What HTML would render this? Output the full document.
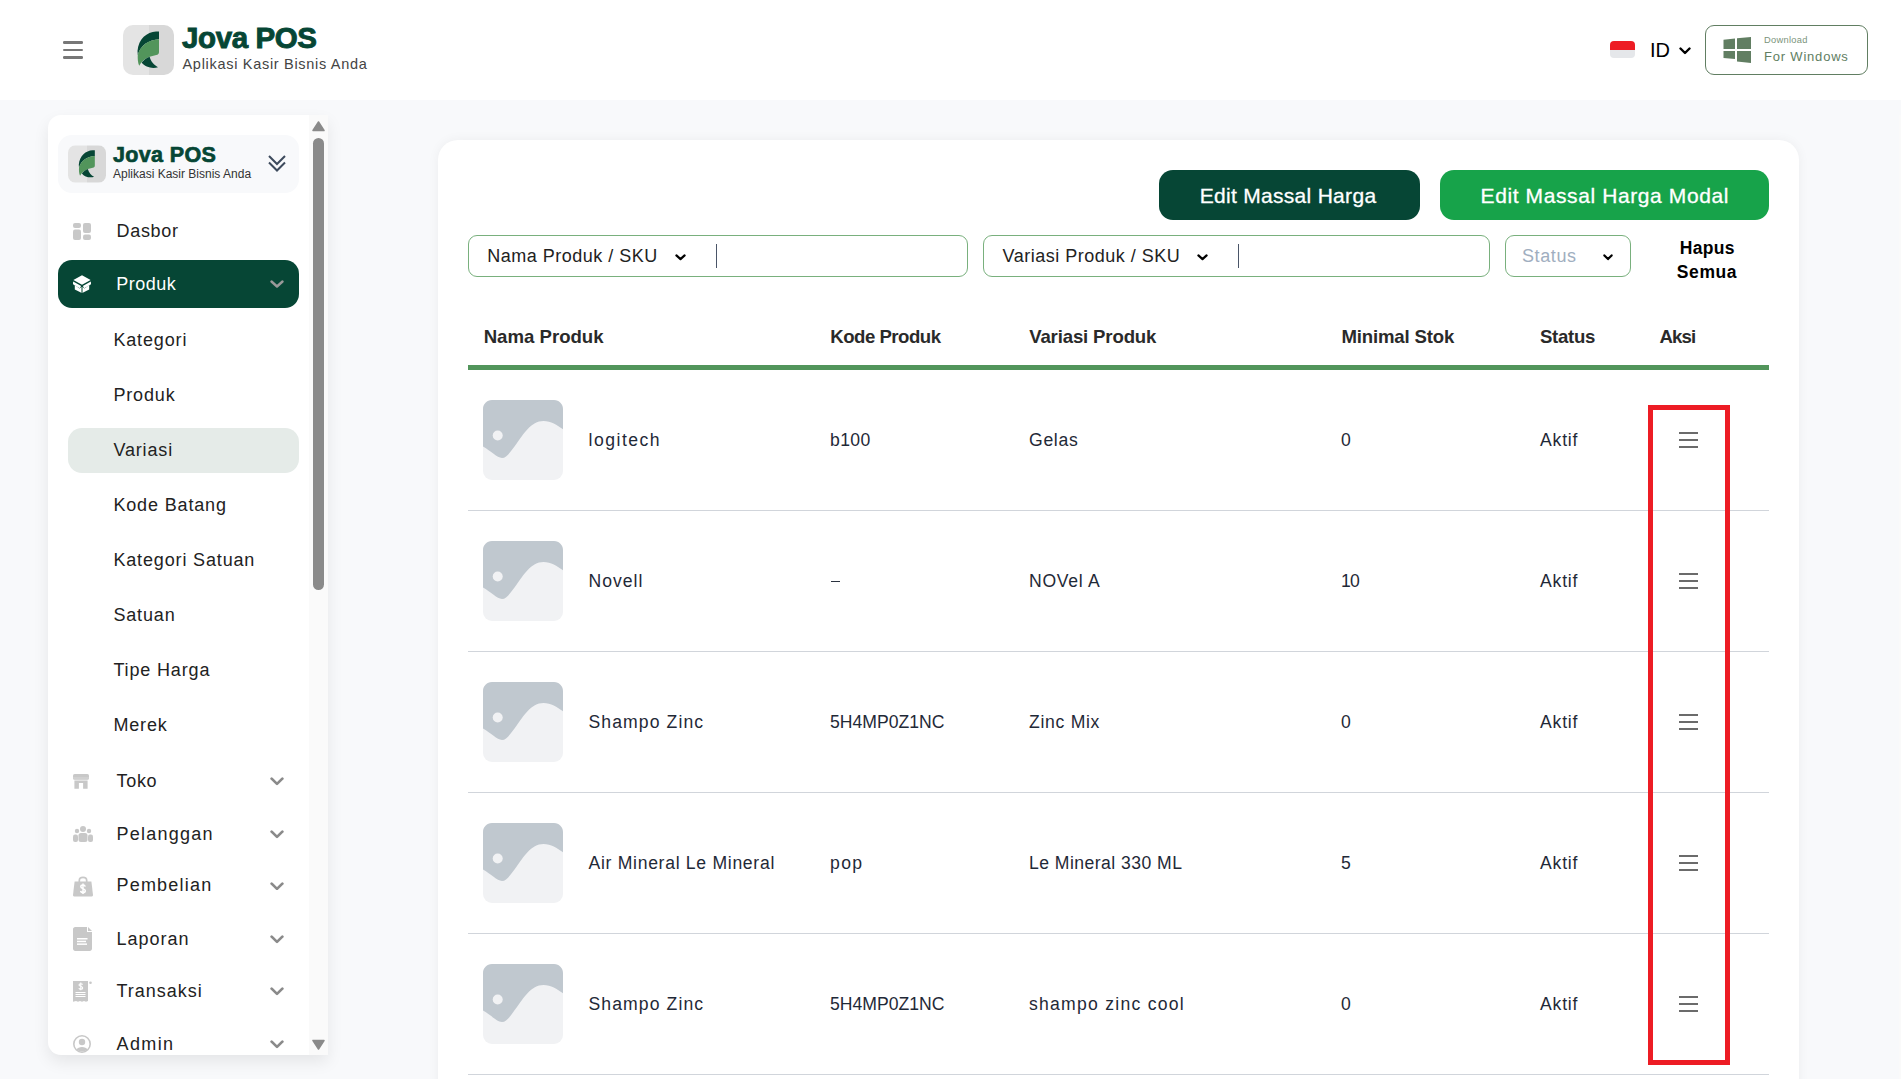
<!DOCTYPE html>
<html><head><meta charset="utf-8"><title>Jova POS - Variasi</title>
<style>
html,body{margin:0;padding:0}
body{width:1901px;height:1079px;overflow:hidden;position:relative;background:#f8f9fb;font-family:"Liberation Sans",sans-serif}
.t{position:absolute;line-height:1;white-space:nowrap}
</style></head><body>
<div style="position:absolute;left:0px;top:0px;width:1901px;height:100px;background:#fff"></div>
<div style="position:absolute;left:63px;top:41.4px;width:20px;height:2.2px;background:#777;border-radius:1.2px"></div>
<div style="position:absolute;left:63px;top:48.7px;width:20px;height:2.2px;background:#777;border-radius:1.2px"></div>
<div style="position:absolute;left:63px;top:56.4px;width:20px;height:2.2px;background:#777;border-radius:1.2px"></div>
<svg width="51" height="50" viewBox="0 0 51 50" style="position:absolute;left:123px;top:25px">
<defs><clipPath id="ch"><rect x="0" y="0" width="51" height="50" rx="10"/></clipPath></defs>
<g clip-path="url(#ch)"><rect x="0" y="0" width="25.5" height="50" fill="#e4e4e4"/><rect x="25.5" y="0" width="25.5" height="50" fill="#d8d8d8"/></g>
<path d="M36,6.6 L36,14.2 C26,14.8 17.5,20 14.8,30 L14.5,26 C15.5,14 24,7 33,6.6 Z" fill="#064635"/>
<path d="M36,14.2 L36,27 C36,29 35,29.6 33.3,30 L26.6,31.8 C22,33.5 18.5,36.5 16.2,40.8 C14.8,38 14.5,33 14.8,29.6 C17.5,20 26,14.8 36,14.2 Z" fill="#52955b"/>
<path d="M26.6,31.8 C28,37 31,40 35,42.2 C30,44 22,42.5 18.6,37.6 C21,34.8 23.5,33 26.6,31.8 Z" fill="#064635"/>
</svg>
<div class="t" style="left:182.0px;top:22.9px;font-size:29.5px;color:#064635;font-weight:800;letter-spacing:-0.4px;-webkit-text-stroke:0.9px #064635">Jova POS</div>
<div class="t" style="left:182.5px;top:56.7px;font-size:14.5px;color:#444;font-weight:400;letter-spacing:0.7px;">Aplikasi Kasir Bisnis Anda</div>
<div style="position:absolute;left:1610px;top:41px;width:25px;height:17px;border-radius:4px;overflow:hidden"><div style="height:8.5px;background:#ed1c24"></div><div style="height:8.5px;background:#e5e7ea"></div></div>
<div class="t" style="left:1650.0px;top:39.8px;font-size:20px;color:#000;font-weight:400;letter-spacing:0px;">ID</div>
<svg style="position:absolute;left:1679px;top:47px" width="12" height="7.5" viewBox="0 0 12 7.5"><path d="M1.5,1.5 L6.0,6.0 L10.5,1.5" fill="none" stroke="#000" stroke-width="2.4" stroke-linecap="round" stroke-linejoin="round"/></svg>
<div style="position:absolute;left:1705px;top:25px;width:161px;height:48px;border:1px solid #617e62;border-radius:9px;background:#fff"></div>
<svg style="position:absolute;left:1723px;top:37px" width="29" height="27" viewBox="0 0 29 27"><path d="M0.5,2.7 L12,1.5 L12,11.9 L0.5,11.9 Z M14,1.3 L28,0 L28,11.9 L14,11.9 Z M0.5,14 L12,14 L12,22 L0.5,21 Z M14,14 L28,14 L28,26 L14,24.5 Z" fill="#617e62"/></svg>
<div class="t" style="left:1764.0px;top:35.8px;font-size:9.3px;color:#7a937b;font-weight:400;letter-spacing:0.3px;">Download</div>
<div class="t" style="left:1764.0px;top:49.7px;font-size:13px;color:#617e62;font-weight:400;letter-spacing:0.8px;">For Windows</div>
<div style="position:absolute;left:1899px;top:115px;width:2px;height:964px;background:#fafafa"></div>
<div style="position:absolute;left:48px;top:115px;width:280px;height:940px;background:#fff;border-radius:13px 0 0 13px;box-shadow:0 7px 16px rgba(0,0,0,0.08)"></div>
<div style="position:absolute;left:309px;top:115px;width:19px;height:940px;background:#fafafa"></div>
<div style="position:absolute;left:313px;top:138px;width:11px;height:452px;background:#8a8a8a;border-radius:6px"></div>
<svg style="position:absolute;left:312px;top:121px" width="13" height="11" viewBox="0 0 13 11"><path d="M6.5,1 L12,9.5 L1,9.5 Z" fill="#8a8a8a" stroke="#8a8a8a" stroke-width="1.5" stroke-linejoin="round"/></svg>
<svg style="position:absolute;left:312px;top:1039px" width="13" height="11" viewBox="0 0 13 11"><path d="M1,1.5 L12,1.5 L6.5,10 Z" fill="#8a8a8a" stroke="#8a8a8a" stroke-width="1.5" stroke-linejoin="round"/></svg>
<div style="position:absolute;left:58px;top:135px;width:241px;height:58px;background:#f8f9fb;border-radius:14px"></div>
<svg width="38" height="38" viewBox="0 0 51 50" style="position:absolute;left:68px;top:145px">
<defs><clipPath id="cs"><rect x="0" y="0" width="51" height="50" rx="10"/></clipPath></defs>
<g clip-path="url(#cs)"><rect x="0" y="0" width="25.5" height="50" fill="#e4e4e4"/><rect x="25.5" y="0" width="25.5" height="50" fill="#d8d8d8"/></g>
<path d="M36,6.6 L36,14.2 C26,14.8 17.5,20 14.8,30 L14.5,26 C15.5,14 24,7 33,6.6 Z" fill="#064635"/>
<path d="M36,14.2 L36,27 C36,29 35,29.6 33.3,30 L26.6,31.8 C22,33.5 18.5,36.5 16.2,40.8 C14.8,38 14.5,33 14.8,29.6 C17.5,20 26,14.8 36,14.2 Z" fill="#52955b"/>
<path d="M26.6,31.8 C28,37 31,40 35,42.2 C30,44 22,42.5 18.6,37.6 C21,34.8 23.5,33 26.6,31.8 Z" fill="#064635"/>
</svg>
<div class="t" style="left:113.0px;top:144.8px;font-size:21.5px;color:#064635;font-weight:800;letter-spacing:0.35px;-webkit-text-stroke:0.7px #064635">Jova POS</div>
<div class="t" style="left:113.0px;top:168.3px;font-size:12px;color:#333;font-weight:400;letter-spacing:0px;">Aplikasi Kasir Bisnis Anda</div>
<svg style="position:absolute;left:267px;top:154px" width="20" height="19" viewBox="0 0 20 19"><path d="M2,2 L10,10 L18,2 M2,8.5 L10,16.5 L18,8.5" fill="none" stroke="#3d4a5c" stroke-width="2"/></svg>
<div style="position:absolute;left:58px;top:260px;width:241px;height:48px;background:#064635;border-radius:14px"></div>
<div style="position:absolute;left:68px;top:428px;width:231px;height:45px;background:#e5ebe8;border-radius:14px"></div>
<div class="t" style="left:116.5px;top:221.8px;font-size:18px;color:#222;font-weight:400;letter-spacing:0.7px;">Dasbor</div>
<div class="t" style="left:116.3px;top:275.1px;font-size:18px;color:#fff;font-weight:400;letter-spacing:0.5px;">Produk</div>
<svg style="position:absolute;left:270px;top:280px" width="14" height="8" viewBox="0 0 14 8"><path d="M1.5,1.5 L7.0,6.5 L12.5,1.5" fill="none" stroke="#999" stroke-width="2.4" stroke-linecap="round" stroke-linejoin="round"/></svg>
<div class="t" style="left:113.4px;top:331.2px;font-size:18px;color:#222;font-weight:400;letter-spacing:0.85px;">Kategori</div>
<div class="t" style="left:113.4px;top:386.2px;font-size:18px;color:#222;font-weight:400;letter-spacing:0.85px;">Produk</div>
<div class="t" style="left:113.4px;top:441.2px;font-size:18px;color:#222;font-weight:400;letter-spacing:0.85px;">Variasi</div>
<div class="t" style="left:113.4px;top:496.2px;font-size:18px;color:#222;font-weight:400;letter-spacing:0.85px;">Kode Batang</div>
<div class="t" style="left:113.4px;top:551.2px;font-size:18px;color:#222;font-weight:400;letter-spacing:0.85px;">Kategori Satuan</div>
<div class="t" style="left:113.4px;top:606.2px;font-size:18px;color:#222;font-weight:400;letter-spacing:0.85px;">Satuan</div>
<div class="t" style="left:113.4px;top:661.2px;font-size:18px;color:#222;font-weight:400;letter-spacing:0.85px;">Tipe Harga</div>
<div class="t" style="left:113.4px;top:716.2px;font-size:18px;color:#222;font-weight:400;letter-spacing:0.85px;">Merek</div>
<div class="t" style="left:116.5px;top:771.6px;font-size:18px;color:#222;font-weight:400;letter-spacing:0.7px;">Toko</div>
<svg style="position:absolute;left:270px;top:777.0px" width="14" height="8.5" viewBox="0 0 14 8.5"><path d="M1.6500000000000001,1.6500000000000001 L7.0,6.8500000000000005 L12.35,1.6500000000000001" fill="none" stroke="#8a8a8a" stroke-width="2.7" stroke-linecap="round" stroke-linejoin="round"/></svg>
<div class="t" style="left:116.5px;top:824.8px;font-size:18px;color:#222;font-weight:400;letter-spacing:1.25px;">Pelanggan</div>
<svg style="position:absolute;left:270px;top:830.2px" width="14" height="8.5" viewBox="0 0 14 8.5"><path d="M1.6500000000000001,1.6500000000000001 L7.0,6.8500000000000005 L12.35,1.6500000000000001" fill="none" stroke="#8a8a8a" stroke-width="2.7" stroke-linecap="round" stroke-linejoin="round"/></svg>
<div class="t" style="left:116.5px;top:876.2px;font-size:18px;color:#222;font-weight:400;letter-spacing:1.2px;">Pembelian</div>
<svg style="position:absolute;left:270px;top:881.6px" width="14" height="8.5" viewBox="0 0 14 8.5"><path d="M1.6500000000000001,1.6500000000000001 L7.0,6.8500000000000005 L12.35,1.6500000000000001" fill="none" stroke="#8a8a8a" stroke-width="2.7" stroke-linecap="round" stroke-linejoin="round"/></svg>
<div class="t" style="left:116.5px;top:929.8px;font-size:18px;color:#222;font-weight:400;letter-spacing:1.0px;">Laporan</div>
<svg style="position:absolute;left:270px;top:935.2px" width="14" height="8.5" viewBox="0 0 14 8.5"><path d="M1.6500000000000001,1.6500000000000001 L7.0,6.8500000000000005 L12.35,1.6500000000000001" fill="none" stroke="#8a8a8a" stroke-width="2.7" stroke-linecap="round" stroke-linejoin="round"/></svg>
<div class="t" style="left:116.5px;top:981.8px;font-size:18px;color:#222;font-weight:400;letter-spacing:1.0px;">Transaksi</div>
<svg style="position:absolute;left:270px;top:987.2px" width="14" height="8.5" viewBox="0 0 14 8.5"><path d="M1.6500000000000001,1.6500000000000001 L7.0,6.8500000000000005 L12.35,1.6500000000000001" fill="none" stroke="#8a8a8a" stroke-width="2.7" stroke-linecap="round" stroke-linejoin="round"/></svg>
<div class="t" style="left:116.5px;top:1034.6px;font-size:18px;color:#222;font-weight:400;letter-spacing:1.4px;">Admin</div>
<svg style="position:absolute;left:270px;top:1040.0px" width="14" height="8.5" viewBox="0 0 14 8.5"><path d="M1.6500000000000001,1.6500000000000001 L7.0,6.8500000000000005 L12.35,1.6500000000000001" fill="none" stroke="#8a8a8a" stroke-width="2.7" stroke-linecap="round" stroke-linejoin="round"/></svg>
<svg style="position:absolute;left:73px;top:223px" width="18" height="17" viewBox="0 0 18 17"><rect x="0" y="0" width="8" height="5" rx="2" fill="#c8c8c8"/><rect x="0" y="6.5" width="8" height="10.5" rx="2" fill="#c8c8c8"/><rect x="10" y="0" width="8" height="10" rx="2" fill="#c8c8c8"/><rect x="10" y="11.5" width="8" height="5.5" rx="2" fill="#c8c8c8"/></svg>
<svg style="position:absolute;left:73px;top:275px" width="18" height="18" viewBox="0 0 18 18"><path d="M9,0.2 L17.6,5 L9,9.8 L0.4,5 Z" fill="#fff"/><path d="M0.2,6.6 L8.2,11 L6.6,13.2 L-0.2,9.2 Z M17.8,6.6 L9.8,11 L11.4,13.2 L18.2,9.2 Z" fill="#fff"/><path d="M1.8,10 L6.5,13.6 L8.3,11.9 L8.3,17.8 L1.8,14.4 Z M16.2,10 L11.5,13.6 L9.7,11.9 L9.7,17.8 L16.2,14.4 Z" fill="#fff"/><rect x="8.3" y="12" width="1.4" height="5.8" fill="#8fb0a2"/></svg>
<svg style="position:absolute;left:73px;top:774px" width="16" height="15" viewBox="0 0 16 15"><rect x="0" y="0" width="16" height="5.8" rx="1.6" fill="#c8c8c8"/><rect x="0" y="3.6" width="16" height="0.8" fill="#dcdcdc"/><path d="M1.4,6.4 L14.6,6.4 L14.6,14.8 L10.1,14.8 L10.1,8.9 L5.9,8.9 L5.9,14.8 L1.4,14.8 Z" fill="#c8c8c8"/></svg>
<svg style="position:absolute;left:73px;top:826px" width="20" height="16" viewBox="0 0 20 16"><circle cx="10" cy="3" r="3" fill="#c8c8c8"/><circle cx="4" cy="5" r="2.2" fill="#c8c8c8"/><circle cx="16" cy="5" r="2.2" fill="#c8c8c8"/><rect x="5.5" y="7" width="9" height="9" rx="2.5" fill="#c8c8c8"/><rect x="0" y="8.5" width="5" height="7.5" rx="2" fill="#c8c8c8"/><rect x="15" y="8.5" width="5" height="7.5" rx="2" fill="#c8c8c8"/></svg>
<svg style="position:absolute;left:73px;top:876px" width="20" height="21" viewBox="0 0 20 21"><path d="M6.3,6.5 L6.3,4.6 C6.3,0.3 13.7,0.3 13.7,4.6 L13.7,6.5" fill="none" stroke="#c8c8c8" stroke-width="1.7"/><path d="M1.6,5.6 L18.4,5.6 L20,19 C20,20.2 19.2,20.6 18,20.6 L2,20.6 C0.8,20.6 0,20.2 0,19 Z" fill="#c8c8c8"/><path d="M12.2,10.6 C12,9.4 11,9 10,9 C8.8,9 7.8,9.6 7.8,10.7 C7.8,13 12.3,12.3 12.3,14.8 C12.3,16 11.2,16.6 10,16.6 C8.8,16.6 7.8,16 7.7,14.9 M10,7.6 L10,18" fill="none" stroke="#fff" stroke-width="1.5"/></svg>
<svg style="position:absolute;left:73px;top:927px" width="19" height="24" viewBox="0 0 19 24"><path d="M2.2,0 L14,0 L14,5 L19,5 L19,21.8 C19,23 18,24 16.8,24 L2.2,24 C1,24 0,23 0,21.8 L0,2.2 C0,1 1,0 2.2,0 Z" fill="#c8c8c8"/><path d="M15,0 L19,4 L15,4 Z" fill="#c8c8c8"/><rect x="4" y="11" width="10.5" height="1.5" fill="#fff"/><rect x="4" y="13.7" width="9" height="1.5" fill="#fff"/><rect x="4" y="16.4" width="10" height="1.5" fill="#fff"/></svg>
<svg style="position:absolute;left:73px;top:981px" width="19" height="21" viewBox="0 0 19 21"><path d="M0,0 L15,0 L15,20 L13,20.8 L11,20 L9,20.8 L7,20 L5,20.8 L3,20 L0,20.8 Z" fill="#c8c8c8"/><circle cx="17.5" cy="1.7" r="1.3" fill="#c8c8c8"/><path d="M9.6,3.6 C9.4,3 8.8,2.7 7.7,2.7 C6.7,2.7 6,3.2 6,4 C6,5.6 9.7,5.1 9.7,6.9 C9.7,7.8 8.9,8.2 7.8,8.2 C6.8,8.2 6.1,7.8 5.9,7.1 M7.8,1.6 L7.8,9.3" fill="none" stroke="#fff" stroke-width="1.1"/><rect x="2.5" y="11" width="10" height="1" fill="#fff"/><rect x="2.5" y="13" width="10" height="1" fill="#fff"/><rect x="2.5" y="15" width="10" height="1" fill="#fff"/></svg>
<svg style="position:absolute;left:73px;top:1035px" width="18" height="18" viewBox="0 0 18 18"><circle cx="9" cy="9" r="8.2" fill="none" stroke="#c8c8c8" stroke-width="1.6"/><circle cx="9" cy="7" r="3.2" fill="#c8c8c8"/><path d="M3.5,14.5 C5,11 13,11 14.5,14.5 C12,17 6,17 3.5,14.5 Z" fill="#c8c8c8"/></svg>
<div style="position:absolute;left:438px;top:140px;width:1361px;height:1000px;background:#fff;border-radius:20px;box-shadow:0 0 12px rgba(0,0,0,0.05)"></div>
<div style="position:absolute;left:1159px;top:170px;width:261px;height:50px;background:#064635;border-radius:14px"></div>
<div class="t" style="left:1199.7px;top:184.5px;font-size:21px;color:#fff;font-weight:400;letter-spacing:0.3px;-webkit-text-stroke:0.3px #fff">Edit Massal Harga</div>
<div style="position:absolute;left:1440px;top:170px;width:329px;height:50px;background:#17a34a;border-radius:14px"></div>
<div class="t" style="left:1480.6px;top:184.5px;font-size:21px;color:#fff;font-weight:400;letter-spacing:0.6px;-webkit-text-stroke:0.3px #fff">Edit Massal Harga Modal</div>
<div style="position:absolute;left:468px;top:235px;width:498px;height:40px;border:1px solid #79b07d;border-radius:9px;background:#fff"></div>
<div class="t" style="left:487.2px;top:247.0px;font-size:18px;color:#222;font-weight:400;letter-spacing:0.5px;">Nama Produk / SKU</div>
<svg style="position:absolute;left:675px;top:254px" width="11" height="6.5" viewBox="0 0 11 6.5"><path d="M1.4000000000000001,1.4000000000000001 L5.5,5.1000000000000005 L9.6,1.4000000000000001" fill="none" stroke="#000" stroke-width="2.2" stroke-linecap="round" stroke-linejoin="round"/></svg>
<div style="position:absolute;left:716px;top:244px;width:1px;height:24px;background:#4a5568"></div>
<div style="position:absolute;left:983px;top:235px;width:505px;height:40px;border:1px solid #79b07d;border-radius:9px;background:#fff"></div>
<div class="t" style="left:1002.6px;top:247.0px;font-size:18px;color:#222;font-weight:400;letter-spacing:0.5px;">Variasi Produk / SKU</div>
<svg style="position:absolute;left:1197px;top:254px" width="11" height="6.5" viewBox="0 0 11 6.5"><path d="M1.4000000000000001,1.4000000000000001 L5.5,5.1000000000000005 L9.6,1.4000000000000001" fill="none" stroke="#000" stroke-width="2.2" stroke-linecap="round" stroke-linejoin="round"/></svg>
<div style="position:absolute;left:1238px;top:244px;width:1px;height:24px;background:#4a5568"></div>
<div style="position:absolute;left:1505px;top:235px;width:124px;height:40px;border:1px solid #79b07d;border-radius:9px;background:#fff"></div>
<div class="t" style="left:1522.0px;top:247.0px;font-size:18px;color:#a0aec0;font-weight:400;letter-spacing:0.6px;">Status</div>
<svg style="position:absolute;left:1603px;top:254px" width="10" height="6.5" viewBox="0 0 10 6.5"><path d="M1.4000000000000001,1.4000000000000001 L5.0,5.1000000000000005 L8.6,1.4000000000000001" fill="none" stroke="#000" stroke-width="2.2" stroke-linecap="round" stroke-linejoin="round"/></svg>
<div class="t" style="left:1679.7px;top:239.5px;font-size:17.5px;color:#000;font-weight:700;letter-spacing:0.3px;">Hapus</div>
<div class="t" style="left:1676.8px;top:264.2px;font-size:17.5px;color:#000;font-weight:700;letter-spacing:0.6px;">Semua</div>
<div class="t" style="left:483.7px;top:328.3px;font-size:18.6px;color:#2a2a2a;font-weight:700;letter-spacing:0px;">Nama Produk</div>
<div class="t" style="left:830.3px;top:328.3px;font-size:18.6px;color:#2a2a2a;font-weight:700;letter-spacing:-0.5px;">Kode Produk</div>
<div class="t" style="left:1029.2px;top:328.3px;font-size:18.6px;color:#2a2a2a;font-weight:700;letter-spacing:-0.15px;">Variasi Produk</div>
<div class="t" style="left:1341.4px;top:328.3px;font-size:18.6px;color:#2a2a2a;font-weight:700;letter-spacing:-0.15px;">Minimal Stok</div>
<div class="t" style="left:1540.0px;top:328.3px;font-size:18.6px;color:#2a2a2a;font-weight:700;letter-spacing:-0.3px;">Status</div>
<div class="t" style="left:1659.5px;top:328.3px;font-size:18.6px;color:#2a2a2a;font-weight:700;letter-spacing:-0.9px;">Aksi</div>
<div style="position:absolute;left:468px;top:365px;width:1301px;height:4.5px;background:#52955b"></div>
<svg style="position:absolute;left:483px;top:400px" width="80" height="80" viewBox="0 0 80 80">
<rect width="80" height="80" rx="9" fill="#f1f2f4"/>
<path d="M9,0 L71,0 C76,0 80,4 80,9 L80,29.2 C74,25 68,21 60.5,21 C48,21 40,35 34,43 C28,51 24,58 19,58 C14,58 8,51 0,46.6 L0,9 C0,4 4,0 9,0 Z" fill="#c0c8cf"/>
<circle cx="14.7" cy="35.5" r="5" fill="#f1f2f4"/></svg>
<div class="t" style="left:588.5px;top:432.3px;font-size:17.6px;color:#1f2937;font-weight:400;letter-spacing:1.5px;">logitech</div>
<div class="t" style="left:830.0px;top:432.3px;font-size:17.6px;color:#1f2937;font-weight:400;letter-spacing:0.4px;">b100</div>
<div class="t" style="left:1029.0px;top:432.3px;font-size:17.6px;color:#1f2937;font-weight:400;letter-spacing:0.7px;">Gelas</div>
<div class="t" style="left:1341.0px;top:432.3px;font-size:17.6px;color:#1f2937;font-weight:400;letter-spacing:0.3px;">0</div>
<div class="t" style="left:1540.0px;top:432.3px;font-size:17.6px;color:#1f2937;font-weight:400;letter-spacing:0.8px;">Aktif</div>
<div style="position:absolute;left:1679px;top:432px;width:19px;height:2px;background:#6b6b6b"></div>
<div style="position:absolute;left:1679px;top:439px;width:19px;height:2px;background:#6b6b6b"></div>
<div style="position:absolute;left:1679px;top:446px;width:19px;height:2px;background:#6b6b6b"></div>
<div style="position:absolute;left:468px;top:510px;width:1301px;height:1px;background:#d1d5db"></div>
<svg style="position:absolute;left:483px;top:541px" width="80" height="80" viewBox="0 0 80 80">
<rect width="80" height="80" rx="9" fill="#f1f2f4"/>
<path d="M9,0 L71,0 C76,0 80,4 80,9 L80,29.2 C74,25 68,21 60.5,21 C48,21 40,35 34,43 C28,51 24,58 19,58 C14,58 8,51 0,46.6 L0,9 C0,4 4,0 9,0 Z" fill="#c0c8cf"/>
<circle cx="14.7" cy="35.5" r="5" fill="#f1f2f4"/></svg>
<div class="t" style="left:588.5px;top:573.3px;font-size:17.6px;color:#1f2937;font-weight:400;letter-spacing:1.0px;">Novell</div>
<div style="position:absolute;left:830.5px;top:580.8000000000001px;width:9px;height:1.6px;background:#2b3340"></div>
<div class="t" style="left:1029.0px;top:573.3px;font-size:17.6px;color:#1f2937;font-weight:400;letter-spacing:0.7px;">NOVel A</div>
<div class="t" style="left:1341.0px;top:573.3px;font-size:17.6px;color:#1f2937;font-weight:400;letter-spacing:-0.8px;">10</div>
<div class="t" style="left:1540.0px;top:573.3px;font-size:17.6px;color:#1f2937;font-weight:400;letter-spacing:0.8px;">Aktif</div>
<div style="position:absolute;left:1679px;top:573px;width:19px;height:2px;background:#6b6b6b"></div>
<div style="position:absolute;left:1679px;top:580px;width:19px;height:2px;background:#6b6b6b"></div>
<div style="position:absolute;left:1679px;top:587px;width:19px;height:2px;background:#6b6b6b"></div>
<div style="position:absolute;left:468px;top:651px;width:1301px;height:1px;background:#d1d5db"></div>
<svg style="position:absolute;left:483px;top:682px" width="80" height="80" viewBox="0 0 80 80">
<rect width="80" height="80" rx="9" fill="#f1f2f4"/>
<path d="M9,0 L71,0 C76,0 80,4 80,9 L80,29.2 C74,25 68,21 60.5,21 C48,21 40,35 34,43 C28,51 24,58 19,58 C14,58 8,51 0,46.6 L0,9 C0,4 4,0 9,0 Z" fill="#c0c8cf"/>
<circle cx="14.7" cy="35.5" r="5" fill="#f1f2f4"/></svg>
<div class="t" style="left:588.5px;top:714.3px;font-size:17.6px;color:#1f2937;font-weight:400;letter-spacing:1.1px;">Shampo Zinc</div>
<div class="t" style="left:830.0px;top:714.3px;font-size:17.6px;color:#1f2937;font-weight:400;letter-spacing:0.0px;">5H4MP0Z1NC</div>
<div class="t" style="left:1029.0px;top:714.3px;font-size:17.6px;color:#1f2937;font-weight:400;letter-spacing:0.7px;">Zinc Mix</div>
<div class="t" style="left:1341.0px;top:714.3px;font-size:17.6px;color:#1f2937;font-weight:400;letter-spacing:0.3px;">0</div>
<div class="t" style="left:1540.0px;top:714.3px;font-size:17.6px;color:#1f2937;font-weight:400;letter-spacing:0.8px;">Aktif</div>
<div style="position:absolute;left:1679px;top:714px;width:19px;height:2px;background:#6b6b6b"></div>
<div style="position:absolute;left:1679px;top:721px;width:19px;height:2px;background:#6b6b6b"></div>
<div style="position:absolute;left:1679px;top:728px;width:19px;height:2px;background:#6b6b6b"></div>
<div style="position:absolute;left:468px;top:792px;width:1301px;height:1px;background:#d1d5db"></div>
<svg style="position:absolute;left:483px;top:823px" width="80" height="80" viewBox="0 0 80 80">
<rect width="80" height="80" rx="9" fill="#f1f2f4"/>
<path d="M9,0 L71,0 C76,0 80,4 80,9 L80,29.2 C74,25 68,21 60.5,21 C48,21 40,35 34,43 C28,51 24,58 19,58 C14,58 8,51 0,46.6 L0,9 C0,4 4,0 9,0 Z" fill="#c0c8cf"/>
<circle cx="14.7" cy="35.5" r="5" fill="#f1f2f4"/></svg>
<div class="t" style="left:588.5px;top:855.3px;font-size:17.6px;color:#1f2937;font-weight:400;letter-spacing:0.7px;">Air Mineral Le Mineral</div>
<div class="t" style="left:830.0px;top:855.3px;font-size:17.6px;color:#1f2937;font-weight:400;letter-spacing:1.4px;">pop</div>
<div class="t" style="left:1029.0px;top:855.3px;font-size:17.6px;color:#1f2937;font-weight:400;letter-spacing:0.45px;">Le Mineral 330 ML</div>
<div class="t" style="left:1341.0px;top:855.3px;font-size:17.6px;color:#1f2937;font-weight:400;letter-spacing:0.3px;">5</div>
<div class="t" style="left:1540.0px;top:855.3px;font-size:17.6px;color:#1f2937;font-weight:400;letter-spacing:0.8px;">Aktif</div>
<div style="position:absolute;left:1679px;top:855px;width:19px;height:2px;background:#6b6b6b"></div>
<div style="position:absolute;left:1679px;top:862px;width:19px;height:2px;background:#6b6b6b"></div>
<div style="position:absolute;left:1679px;top:869px;width:19px;height:2px;background:#6b6b6b"></div>
<div style="position:absolute;left:468px;top:933px;width:1301px;height:1px;background:#d1d5db"></div>
<svg style="position:absolute;left:483px;top:964px" width="80" height="80" viewBox="0 0 80 80">
<rect width="80" height="80" rx="9" fill="#f1f2f4"/>
<path d="M9,0 L71,0 C76,0 80,4 80,9 L80,29.2 C74,25 68,21 60.5,21 C48,21 40,35 34,43 C28,51 24,58 19,58 C14,58 8,51 0,46.6 L0,9 C0,4 4,0 9,0 Z" fill="#c0c8cf"/>
<circle cx="14.7" cy="35.5" r="5" fill="#f1f2f4"/></svg>
<div class="t" style="left:588.5px;top:996.3px;font-size:17.6px;color:#1f2937;font-weight:400;letter-spacing:1.1px;">Shampo Zinc</div>
<div class="t" style="left:830.0px;top:996.3px;font-size:17.6px;color:#1f2937;font-weight:400;letter-spacing:0.0px;">5H4MP0Z1NC</div>
<div class="t" style="left:1029.0px;top:996.3px;font-size:17.6px;color:#1f2937;font-weight:400;letter-spacing:1.25px;">shampo zinc cool</div>
<div class="t" style="left:1341.0px;top:996.3px;font-size:17.6px;color:#1f2937;font-weight:400;letter-spacing:0.3px;">0</div>
<div class="t" style="left:1540.0px;top:996.3px;font-size:17.6px;color:#1f2937;font-weight:400;letter-spacing:0.8px;">Aktif</div>
<div style="position:absolute;left:1679px;top:996px;width:19px;height:2px;background:#6b6b6b"></div>
<div style="position:absolute;left:1679px;top:1003px;width:19px;height:2px;background:#6b6b6b"></div>
<div style="position:absolute;left:1679px;top:1010px;width:19px;height:2px;background:#6b6b6b"></div>
<div style="position:absolute;left:468px;top:1074px;width:1301px;height:1px;background:#d1d5db"></div>
<div style="position:absolute;left:1648px;top:405px;width:72px;height:650px;border:5px solid #ed1c24"></div>
</body></html>
